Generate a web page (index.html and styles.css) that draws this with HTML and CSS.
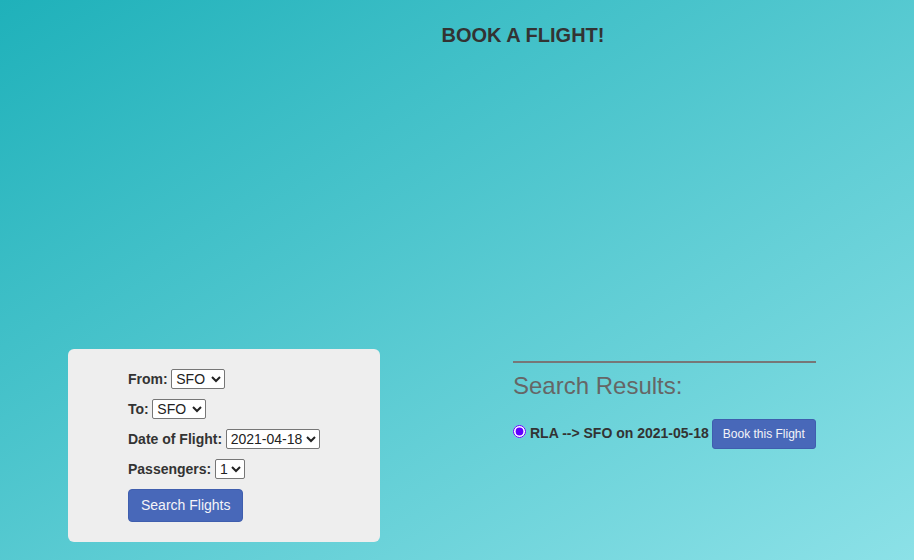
FILE: index.html
```html
<!DOCTYPE html>
<html>
<head>
<meta charset="utf-8">
<title>Book a Flight</title>
<link rel="stylesheet" href="styles.css">
</head>
<body>
  <h2 class="title">BOOK A FLIGHT!</h2>
  <main class="main">
    <section class="card">
      <div class="row"><label class="lbl">From:</label> <select class="sel sel-airport"><option>SFO</option><option>RLA</option><option>MDW</option></select></div>
      <div class="row"><label class="lbl">To:</label> <select class="sel sel-airport"><option>SFO</option><option>RLA</option><option>MDW</option></select></div>
      <div class="row"><label class="lbl">Date of Flight:</label> <select class="sel"><option>2021-04-18</option><option>2021-05-18</option></select></div>
      <div class="row"><label class="lbl">Passengers:</label> <select class="sel"><option>1</option><option>2</option></select></div>
      <button class="btn">Search Flights</button>
    </section>
    <section class="results">
      <hr class="rule">
      <h3 class="results-title">Search Results:</h3>
      <div class="result"><input class="radio" type="radio" name="flight" checked><span class="flight">RLA --&gt; SFO on 2021-05-18</span><button class="btn btn-sm">Book this Flight</button></div>
    </section>
  </main>
</body>
</html>
```
FILE: styles.css
```css
html, body {
  margin: 0;
  height: 100%;
}
body {
  min-height: 560px;
  background: linear-gradient(to bottom right, #1fb1ba, #8ce1e7);
  font-family: "Liberation Sans", Arial, sans-serif;
  color: #333;
  font-size: 14px;
}
.title {
  margin: 0;
  padding: 24px 0 0 132px;
  text-align: center;
  font-size: 20px;
  line-height: 23px;
  font-weight: bold;
  color: #333;
}
.main {
  display: flex;
  margin-top: 302px;
  padding-left: 68px;
  gap: 133px;
  align-items: flex-start;
}
.card {
  box-sizing: border-box;
  width: 312px;
  height: 193px;
  background: #eeeeee;
  border-radius: 6px;
  padding: 20px 0 0 60px;
  display: flex;
  flex-direction: column;
  align-items: flex-start;
  gap: 10px;
}
.row {
  height: 20px;
  display: flex;
  align-items: center;
  gap: 3.6px;
}
.lbl {
  font-weight: bold;
  font-size: 14px;
  color: #333;
}
.sel {
  font-family: "Liberation Sans", Arial, sans-serif;
  font-size: 14px;
  height: 20px;
  color: #222;
  background: #fff;
  border: 1px solid #767676;
  border-radius: 2px;
  padding: 0;
}
.sel-airport {
  width: 54px;
}
.btn {
  font-family: "Liberation Sans", Arial, sans-serif;
  font-size: 14px;
  line-height: 19px;
  padding: 6px 12px;
  background: #4868b9;
  color: #f4f4f8;
  border: 1px solid #3f5eae;
  border-radius: 4px;
}
.btn-sm {
  font-size: 12px;
  line-height: 18px;
  padding: 5px 10px;
  border-radius: 3px;
}
.results {
  width: 303px;
  padding-top: 12px;
}
.rule {
  margin: 0;
  border: 0;
  border-top: 2px solid #777;
}
.results-title {
  margin: 9px 0 19px;
  font-size: 24px;
  line-height: 28px;
  font-weight: normal;
  color: #666;
}
.result {
  font-size: 14px;
  line-height: 20px;
  white-space: nowrap;
}
.radio {
  margin: 0 4px 0 0;
  width: 13px;
  height: 13px;
  accent-color: #5e00ff;
  vertical-align: baseline;
}
.flight {
  font-weight: bold;
  color: #333;
  margin-right: 3px;
}
```
